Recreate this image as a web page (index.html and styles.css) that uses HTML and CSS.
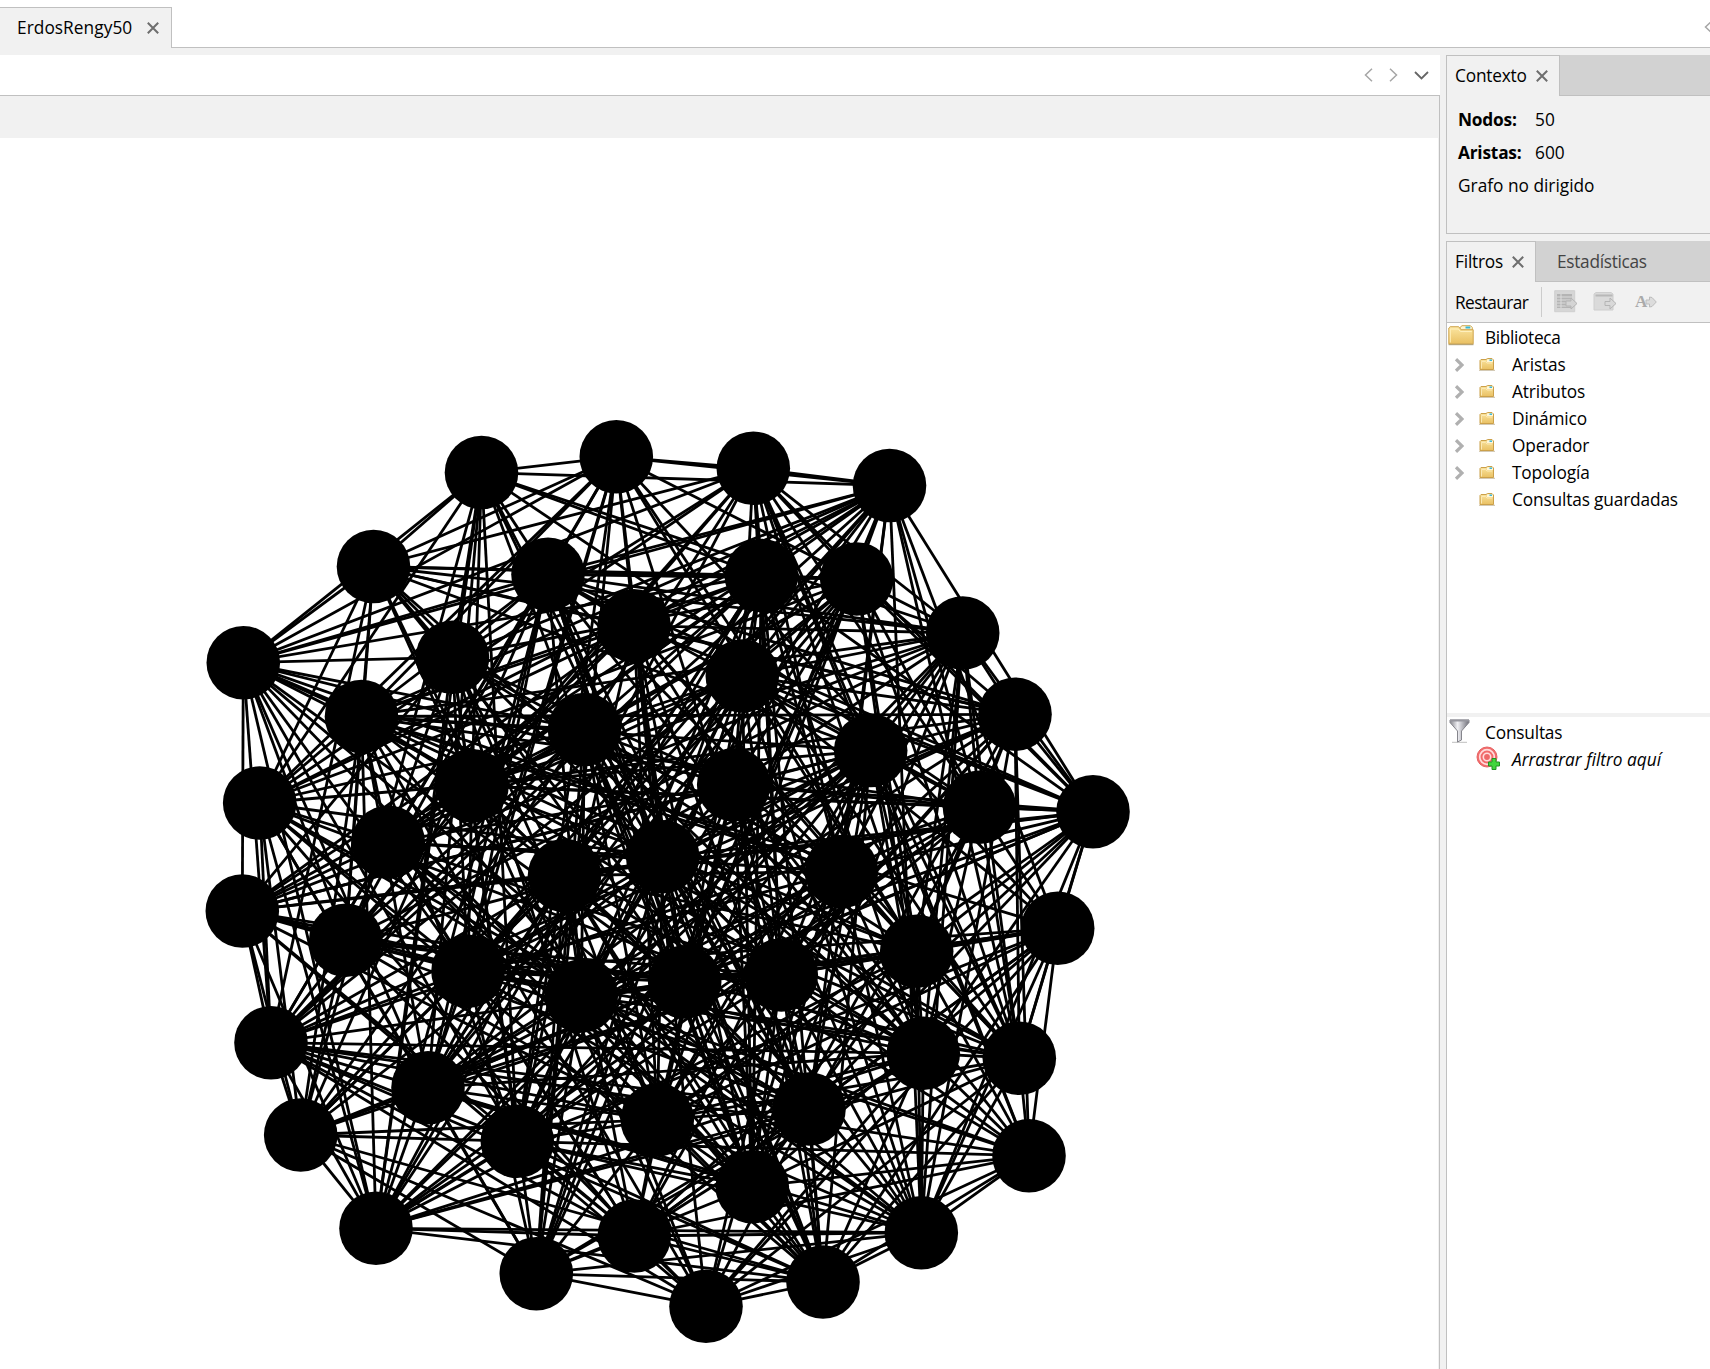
FILE: index.html
```html
<!DOCTYPE html>
<html lang="es">
<head>
<meta charset="utf-8">
<title>ErdosRengy50</title>
<link rel="stylesheet" href="styles.css">
</head>
<body>
<svg width="0" height="0" class="defs">
  <defs>
    <linearGradient id="gold" x1="0" y1="0" x2="0" y2="1"><stop offset="0" stop-color="#fbe6a2"/><stop offset="1" stop-color="#e9c062"/></linearGradient>
    <linearGradient id="steel"><stop offset="0" stop-color="#85858c"/><stop offset=".4" stop-color="#f0f0f4"/><stop offset="1" stop-color="#6f6f78"/></linearGradient>
    <symbol id="close" viewBox="0 0 12 12"><path d="M.8.8l10.4 10.4M11.2.8L.8 11.2" fill="none" stroke="#6e6e6e" stroke-width="2"/></symbol>
    <symbol id="left" viewBox="0 0 9 14"><path d="M8 .8L1.5 7 8 13.2" fill="none" stroke="#a6a6a6" stroke-width="1.5"/></symbol>
    <symbol id="chev" viewBox="0 0 9 14"><path d="M1 1.2L7 7 1 12.8" fill="none" stroke="#b0b0b0" stroke-width="3.2"/></symbol>
    <symbol id="folder" viewBox="0 0 26 21">
      <path d="M.5 19.5h25" stroke="#8f8056" stroke-width="1.4" opacity=".7"/>
      <path d="M12 4V2.500L14 .7h8.500L24.300 2.500V6H12z" fill="#fff4d0" stroke="#cda853"/>
      <path d="M17.500 2.500h4.800" stroke="#35b6d8" stroke-width="2"/>
      <path d="M.8 18.800V3L2.200 1.700h8.500L13 4.700h12.200v14.100z" fill="url(#gold)" stroke="#cfa64f"/>
      <path d="M2.300 17.500V4h8l2 2.500h11.500" fill="none" stroke="#fff0bd"/>
    </symbol>
    <symbol id="folder-small" viewBox="0 0 16 13">
      <path d="M0 12.300h16" stroke="#b5a27c" opacity=".7"/>
      <path d="M1 11.500V2.500L2 1.500h5L8.500.500h4.500L14.500 2v9.500z" fill="url(#gold)" stroke="#cba04a"/>
      <path d="M8 4V2l1-.7h4l1 1V4z" fill="#fff6da"/>
      <path d="M10.500 2.200h2.500" stroke="#35b6d8" stroke-width="1.500"/>
      <path d="M2.500 10.500V3.500h4L8 5h5" fill="none" stroke="#fbe9b4"/>
    </symbol>
  </defs>
</svg>
<div class="app">
  <header class="docs">
    <div class="doc-tab"><span>ErdosRengy50</span><svg class="close"><use href="#close"/></svg></div>
    <div class="doc-strip"><svg class="arrow"><use href="#left"/></svg></div>
  </header>
  <div class="work">
    <main class="editor">
      <div class="editor-tabs">
        <svg class="arrow"><use href="#left"/></svg>
        <svg class="arrow next"><use href="#left"/></svg>
        <svg class="down" viewBox="0 0 15 9"><path d="M1 1l6.500 6.500L14 1" fill="none" stroke="#666" stroke-width="1.800"/></svg>
      </div>
      <div class="editor-body">
        <div class="toolbar"></div>
        <svg class="graph" id="graph" viewBox="0 138 1438 1231"></svg>
      </div>
    </main>
    <aside class="side">
      <section class="panel context">
        <div class="tabs"><div class="tab">Contexto<svg class="close"><use href="#close"/></svg></div><div class="strip"></div></div>
        <dl class="stats">
          <div><dt class="n">Nodos:</dt><dd>50</dd></div>
          <div><dt class="a">Aristas:</dt><dd>600</dd></div>
          <div class="kind">Grafo no dirigido</div>
        </dl>
      </section>
      <section class="panel filters">
        <div class="tabs"><div class="tab">Filtros<svg class="close"><use href="#close"/></svg></div><div class="strip"><span>Estadísticas</span></div></div>
        <div class="actions">
          <span class="reset">Restaurar</span><i class="sep"></i>
          <svg class="act" viewBox="0 0 24 24"><path d="M.7.700h20v21H.700z" fill="#d6d6d6" stroke="#cfcfcf"/><path d="M3 4h15v14H3z" fill="#b4b4b4"/><path d="M3 7h15M3 10h15M3 13h15M3 16h15M7 4v14" stroke="#dcdcdc"/><path d="M12 11h5V8l6 5.500-6 5.500v-3h-5z" fill="#d4d4d4" stroke="#b4b4b4"/></svg>
          <svg class="act" viewBox="0 0 24 24"><path d="M1 4l2-1.500h15L20 4v16H1z" fill="#dadada" stroke="#cecece"/><path d="M2.500 5.500h17" stroke="#b8b8b8" stroke-width="2"/><path d="M12 11.500h5V8l6 5.500-6 5.500v-3.500h-5z" fill="#d9d9d9" stroke="#b5b5b5"/></svg>
          <span class="act glyph"><b>A</b><svg viewBox="0 0 12 12"><path d="M1 4h3.500V1L7 1.500l4.300 4.500L7 10.500 4.500 11V8H1z" fill="#dcdcdc" stroke="#bcbcbc"/></svg></span>
        </div>
        <div class="tree library">
          <div class="row root"><svg class="big"><use href="#folder"/></svg><span>Biblioteca</span></div>
          <div class="row"><svg class="chev"><use href="#chev"/></svg><svg class="small"><use href="#folder-small"/></svg><span>Aristas</span></div>
          <div class="row"><svg class="chev"><use href="#chev"/></svg><svg class="small"><use href="#folder-small"/></svg><span>Atributos</span></div>
          <div class="row"><svg class="chev"><use href="#chev"/></svg><svg class="small"><use href="#folder-small"/></svg><span>Dinámico</span></div>
          <div class="row"><svg class="chev"><use href="#chev"/></svg><svg class="small"><use href="#folder-small"/></svg><span>Operador</span></div>
          <div class="row"><svg class="chev"><use href="#chev"/></svg><svg class="small"><use href="#folder-small"/></svg><span>Topología</span></div>
          <div class="row"><i class="chev"></i><svg class="small"><use href="#folder-small"/></svg><span class="saved">Consultas guardadas</span></div>
        </div>
        <div class="tree queries">
          <div class="row root"><svg class="funnel" viewBox="0 0 24 24"><path d="M3 23.500h15" stroke="#aaa" stroke-width="1.500" opacity=".6"/><path d="M1 1h19v2.500L12.500 12v9l-4 2V12L1 3.500z" fill="url(#steel)" stroke="#85858c"/><path d="M1 1.500h19" stroke="#96969e" stroke-width="2"/></svg><span>Consultas</span></div>
          <div class="row drop"><svg class="target" viewBox="0 0 24 24"><circle cx="11" cy="11" r="10" fill="#f26b6b" stroke="#e76464"/><circle cx="11" cy="11" r="7.300" fill="none" stroke="#ffdcdc" stroke-width="1.700"/><circle cx="11" cy="11" r="3.700" fill="#ee6868" stroke="#ffdcdc" stroke-width="1.600"/><path d="M16 12.500h4V16h3.500v4H20v3.500h-4V20h-3.500v-4H16z" fill="#42d63c" stroke="#209323"/></svg><em>Arrastrar filtro aquí</em></div>
        </div>
      </section>
    </aside>
  </div>
</div>
<script src="graph.js"></script>
</body>
</html>
```
FILE: styles.css
```css
* { box-sizing: border-box; }
body { margin: 0; background: #f1f1f1; color: #000; font: 17.3px/27px "Open Sans", "Noto Sans", sans-serif; overflow: hidden; }
.defs { position: absolute; }
svg { display: block; flex: none; }
.app { display: flex; flex-direction: column; width: 1710px; height: 1369px; }
.docs { display: flex; height: 55px; padding-bottom: 7px; background: linear-gradient(#fff 7px, #f1f1f1 7px); }
.doc-tab { display: flex; align-items: center; width: 172px; margin-top: 7px; padding-left: 17px; border: solid #c0c0c0; border-width: 1px 1px 0 0; letter-spacing: .05px; }
.doc-tab span { padding-bottom: 2px; }
.doc-tab .close { margin-left: auto; margin-right: 12px; }
.doc-strip { display: flex; justify-content: flex-end; flex: 1; background: #fff; border-bottom: 1px solid #c0c0c0; overflow: hidden; }
.doc-strip .arrow { margin: 20px -3px 0 0; }
.close { width: 12px; height: 12px; }
.arrow { width: 9px; height: 14px; }
.next { transform: scaleX(-1); }
.work { display: flex; flex: 1; min-height: 0; }
.editor { display: flex; flex-direction: column; width: 1440px; }
.editor-tabs { display: flex; justify-content: flex-end; align-items: center; gap: 16px; height: 40px; padding-right: 11px; background: #fff; }
.down { width: 15px; height: 9px; }
.editor-body { flex: 1; border: solid #c0c0c0; border-width: 1px 1px 0 0; padding-right: 1px; min-height: 0; }
.toolbar { height: 42px; }
.graph { width: 1438px; height: 1231px; background: #fff; stroke-width: 2.8; stroke: #000; }
.graph circle { stroke: none; }
.side { display: flex; flex-direction: column; gap: 7px; width: 264px; margin-left: 6px; }
.panel { border-left: 1px solid #c0c0c0; }
.context { height: 179px; border-bottom: 1px solid #c0c0c0; }
.filters { display: flex; flex-direction: column; flex: 1; }
.tabs { display: flex; height: 41px; }
.tab { display: flex; align-items: center; padding: 0 11px 1px 8px; border: solid #c0c0c0; border-width: 1px 1px 0 0; width: 113px; justify-content: space-between; letter-spacing: -.2px; }
.filters .tab { width: 89px; }
.strip { flex: 1; background: #d2d2d2; border-bottom: 1px solid #c0c0c0; color: #444; padding: 7px 0 0 21px; letter-spacing: -.3px; }
.stats { margin: 10px 0 0 11px; }
.stats div { display: flex; height: 33px; line-height: 27px; }
.stats dt { width: 77px; font-weight: 700; letter-spacing: -.2px; }
.stats dd { margin: 0; }
.actions { display: flex; align-items: center; height: 41px; padding-left: 8px; border-bottom: 1px solid #c0c0c0; }
.reset { width: 86px; letter-spacing: -.6px; }
.sep { width: 1px; height: 30px; margin-right: 12px; background: #ccc; }
.act { width: 24px; height: 24px; margin-right: 15px; }
.glyph { display: flex; align-items: center; width: 26px; color: #aaa; margin-left: 3px; font: 700 17px/24px "Liberation Serif", serif; }
.glyph svg { width: 12px; height: 12px; margin-left: -2px; }
.tree { background: #fff; letter-spacing: -.15px; }
.library { height: 390px; padding-top: 1px; }
.queries { flex: 1; margin-top: 4px; padding-top: 2px; }
.row { display: flex; align-items: center; height: 27px; padding-left: 8px; }
.root { padding-left: 1px; }
.big { width: 26px; height: 21px; margin: -5px 11px 0 0; }
.chev { width: 9px; height: 14px; margin-right: 15px; }
.small { width: 16px; height: 13px; margin-right: 17px; }
.root span { letter-spacing: -.35px; }
.queries .root span { letter-spacing: -.2px; }
.funnel { width: 24px; height: 24px; margin: -3px 12px 0 1px; }
.target { width: 24px; height: 24px; margin: -3px 12px 0 21px; }
.drop em { letter-spacing: 0; }
```
FILE: graph.js
```js
const nodes = [
  [481.5,472.5],[616.3,456.8],[753.3,468.3],[889.5,485.5],[373.5,566.5],
  [548,574.3],[761.3,575.5],[856.7,579],[243.3,662.7],[452.5,657.3],
  [634,625.7],[962.7,633],[361.5,716.5],[742.3,676],[1015,714.3],
  [584.5,729.5],[870.7,750.5],[259.7,803],[472,785.7],[733.7,784.7],
  [979.5,807.3],[1093,811.7],[388.3,842.3],[662.7,856.7],[564.5,875.5],
  [841.5,871.5],[242.3,911],[345.7,940.3],[468,971.3],[581.3,996],
  [684.7,982],[781.3,975],[916.7,951.3],[1057.7,928.3],[271,1042.7],
  [428,1087.7],[517.3,1141.3],[657.3,1119.7],[809,1109],[923.3,1053.3],
  [1019.3,1058.3],[300.7,1135],[1029,1155.7],[752.3,1186.7],[376,1228.3],
  [634.3,1236],[536.3,1273.7],[706,1306.3],[823,1282],[921.3,1232.7]
];

// Neighbours of the rim nodes: fixed links, and pairs that stay apart.
const links = {
  0: [1, 3, 4, 8, 9, 44],
  1: [2, 3, 4, 8],
  2: [3, 4, 8, 21],
  3: [5, 8, 9, 10, 12, 13, 17, 20, 21, 25, 28, 30, 33, 38, 40, 49],
  4: [6, 7, 8, 17],
  8: [5, 6, 9, 12, 15, 25, 26, 27, 28, 34, 44],
  11: [14, 21],
  14: [21, 40, 42, 49],
  17: [34, 41, 44],
  21: [5, 6, 7, 10, 13, 18, 19, 20, 23, 24, 33],
  26: [34, 41, 44],
  33: [40, 42, 49],
  34: [41, 44],
  41: [35, 36, 37, 44, 46, 47],
  42: [40, 47, 48, 49],
  44: [9, 12, 20, 24, 25, 28, 31, 32, 36, 38, 39, 40, 45, 48, 49],
  46: [47, 48, 49],
  47: [48, 49],
  49: [22, 25, 28, 29, 32, 35, 36, 37, 39, 40, 45, 48]
};
const gaps = {
  0: [2],
  3: [4, 6, 7, 11, 14, 15, 16, 18, 19, 31, 32, 39, 42, 43, 45],
  4: [5, 26],
  7: [11],
  8: [7, 10, 11, 13, 14, 16, 17, 18, 22, 24],
  17: [26, 27],
  21: [0, 1, 8, 9, 12, 15, 16, 17, 22, 42],
  33: [14],
  34: [35, 46],
  35: [27, 36, 44],
  36: [46],
  44: [4, 14, 18, 21, 22, 27, 29, 30, 33, 37, 42, 43, 46, 47],
  49: [12, 17, 26, 34, 38, 41, 43]
};
const keys = table => new Set(Object.entries(table).flatMap(
  ([a, list]) => list.map(b => Math.min(a, b) + '-' + Math.max(a, b))));
const linked = keys(links);
const apart = keys(gaps);

const pairs = [];
for (let a = 0; a < nodes.length; a++) {
  for (let b = a + 1; b < nodes.length; b++) {
    const key = a + '-' + b;
    if (apart.has(key)) continue;
    let h = Math.imul(a * 977 + b * 7919 + 17, 2654435761);
    h = Math.imul(h ^ (h >>> 15), 2246822519);
    h = Math.imul(h ^ (h >>> 13), 3266489917);
    const noise = ((h ^ (h >>> 16)) >>> 0) / 4294967296;
    const length = Math.hypot(nodes[a][0] - nodes[b][0], nodes[a][1] - nodes[b][1]);
    pairs.push([linked.has(key) ? -1 : noise + length / 1500, a, b]);
  }
}
pairs.sort((p, q) => p[0] - q[0]);

const degree = nodes.map(() => 0);
let count = 0;
let markup = '';
for (const [, a, b] of pairs) {
  if (count === 600) break;
  if (degree[a] > 26 || degree[b] > 26) continue;
  degree[a]++;
  degree[b]++;
  count++;
  markup += `<line x1="${nodes[a][0]}" y1="${nodes[a][1]}" x2="${nodes[b][0]}" y2="${nodes[b][1]}"/>`;
}
for (const [x, y] of nodes) markup += `<circle cx="${x}" cy="${y}" r="36.8"/>`;
document.getElementById('graph').innerHTML = markup;
```
